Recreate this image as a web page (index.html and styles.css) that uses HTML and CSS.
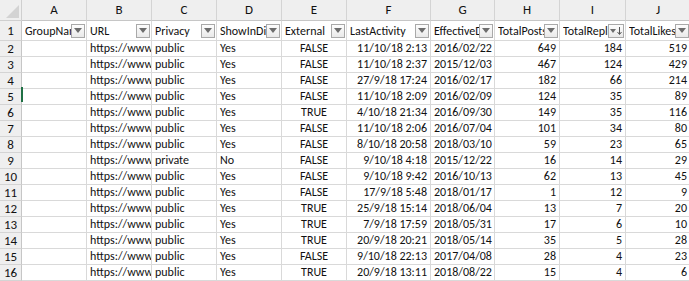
FILE: index.html
```html
<!DOCTYPE html>
<html>
<head>
<meta charset="utf-8">
<link rel="stylesheet" href="styles.css">
</head>
<body>
<div class="sheet">
  <div class="corner"><svg width="22" height="21" viewBox="0 0 22 21"><polygon points="6,18 19,18 19,5" fill="#d3d3d3"/></svg></div>
  <div class="colh">A</div><div class="colh">B</div><div class="colh">C</div><div class="colh">D</div><div class="colh">E</div><div class="colh">F</div><div class="colh">G</div><div class="colh">H</div><div class="colh">I</div><div class="colh">J</div>

  <div class="rowh first">1</div>
  <div class="hd"><span class="ht">GroupName</span><span class="flt"><i class="tri"></i></span></div>
  <div class="hd"><span class="ht">URL</span><span class="flt"><i class="tri"></i></span></div>
  <div class="hd"><span class="ht">Privacy</span><span class="flt"><i class="tri"></i></span></div>
  <div class="hd"><span class="ht">ShowInDirectory</span><span class="flt"><i class="tri"></i></span></div>
  <div class="hd"><span class="ht">External</span><span class="flt"><i class="tri"></i></span></div>
  <div class="hd"><span class="ht">LastActivity</span><span class="flt"><i class="tri"></i></span></div>
  <div class="hd"><span class="ht">EffectiveDate</span><span class="flt"><i class="tri"></i></span></div>
  <div class="hd"><span class="ht">TotalPosts</span><span class="flt"><i class="tri"></i></span></div>
  <div class="hd"><span class="ht">TotalReplies</span><span class="flt sort"><i class="tri small"></i><svg class="arr" width="5" height="8" viewBox="0 0 5 8"><path d="M2.5 0V7M0.5 5L2.5 7.5L4.5 5" stroke="#555" fill="none" stroke-width="1"/></svg></span></div>
  <div class="hd"><span class="ht">TotalLikes</span><span class="flt"><i class="tri"></i></span></div>

  <div class="rowh">2</div><div class="c"></div><div class="c">https://www.yammer.com</div><div class="c">public</div><div class="c">Yes</div><div class="c m">FALSE</div><div class="c r">11/10/18 2:13</div><div class="c">2016/02/22 1</div><div class="c r">649</div><div class="c r">184</div><div class="c r">519</div>
  <div class="rowh">3</div><div class="c"></div><div class="c">https://www.yammer.com</div><div class="c">public</div><div class="c">Yes</div><div class="c m">FALSE</div><div class="c r">11/10/18 2:37</div><div class="c">2015/12/03 1</div><div class="c r">467</div><div class="c r">124</div><div class="c r">429</div>
  <div class="rowh">4</div><div class="c"></div><div class="c">https://www.yammer.com</div><div class="c">public</div><div class="c">Yes</div><div class="c m">FALSE</div><div class="c r">27/9/18 17:24</div><div class="c">2016/02/17 1</div><div class="c r">182</div><div class="c r">66</div><div class="c r">214</div>
  <div class="rowh">5</div><div class="c sel"></div><div class="c">https://www.yammer.com</div><div class="c">public</div><div class="c">Yes</div><div class="c m">FALSE</div><div class="c r">11/10/18 2:09</div><div class="c">2016/02/09 1</div><div class="c r">124</div><div class="c r">35</div><div class="c r">89</div>
  <div class="rowh">6</div><div class="c"></div><div class="c">https://www.yammer.com</div><div class="c">public</div><div class="c">Yes</div><div class="c m">TRUE</div><div class="c r">4/10/18 21:34</div><div class="c">2016/09/30 1</div><div class="c r">149</div><div class="c r">35</div><div class="c r">116</div>
  <div class="rowh">7</div><div class="c"></div><div class="c">https://www.yammer.com</div><div class="c">public</div><div class="c">Yes</div><div class="c m">FALSE</div><div class="c r">11/10/18 2:06</div><div class="c">2016/07/04 1</div><div class="c r">101</div><div class="c r">34</div><div class="c r">80</div>
  <div class="rowh">8</div><div class="c"></div><div class="c">https://www.yammer.com</div><div class="c">public</div><div class="c">Yes</div><div class="c m">FALSE</div><div class="c r">8/10/18 20:58</div><div class="c">2018/03/10 1</div><div class="c r">59</div><div class="c r">23</div><div class="c r">65</div>
  <div class="rowh">9</div><div class="c"></div><div class="c">https://www.yammer.com</div><div class="c">private</div><div class="c">No</div><div class="c m">FALSE</div><div class="c r">9/10/18 4:18</div><div class="c">2015/12/22 1</div><div class="c r">16</div><div class="c r">14</div><div class="c r">29</div>
  <div class="rowh">10</div><div class="c"></div><div class="c">https://www.yammer.com</div><div class="c">public</div><div class="c">Yes</div><div class="c m">FALSE</div><div class="c r">9/10/18 9:42</div><div class="c">2016/10/13 1</div><div class="c r">62</div><div class="c r">13</div><div class="c r">45</div>
  <div class="rowh">11</div><div class="c"></div><div class="c">https://www.yammer.com</div><div class="c">public</div><div class="c">Yes</div><div class="c m">FALSE</div><div class="c r">17/9/18 5:48</div><div class="c">2018/01/17 1</div><div class="c r">1</div><div class="c r">12</div><div class="c r">9</div>
  <div class="rowh">12</div><div class="c"></div><div class="c">https://www.yammer.com</div><div class="c">public</div><div class="c">Yes</div><div class="c m">TRUE</div><div class="c r">25/9/18 15:14</div><div class="c">2018/06/04 1</div><div class="c r">13</div><div class="c r">7</div><div class="c r">20</div>
  <div class="rowh">13</div><div class="c"></div><div class="c">https://www.yammer.com</div><div class="c">public</div><div class="c">Yes</div><div class="c m">TRUE</div><div class="c r">7/9/18 17:59</div><div class="c">2018/05/31 1</div><div class="c r">17</div><div class="c r">6</div><div class="c r">10</div>
  <div class="rowh">14</div><div class="c"></div><div class="c">https://www.yammer.com</div><div class="c">public</div><div class="c">Yes</div><div class="c m">TRUE</div><div class="c r">20/9/18 20:21</div><div class="c">2018/05/14 1</div><div class="c r">35</div><div class="c r">5</div><div class="c r">28</div>
  <div class="rowh">15</div><div class="c"></div><div class="c">https://www.yammer.com</div><div class="c">public</div><div class="c">Yes</div><div class="c m">FALSE</div><div class="c r">9/10/18 22:13</div><div class="c">2017/04/08 1</div><div class="c r">28</div><div class="c r">4</div><div class="c r">23</div>
  <div class="rowh">16</div><div class="c"></div><div class="c">https://www.yammer.com</div><div class="c">public</div><div class="c">Yes</div><div class="c m">TRUE</div><div class="c r">20/9/18 13:11</div><div class="c">2018/08/22 1</div><div class="c r">15</div><div class="c r">4</div><div class="c r">6</div>
</div>
</body>
</html>
```
FILE: styles.css
```css
html, body {
  margin: 0;
  padding: 0;
  overflow: hidden;
  background: #ffffff;
}
.sheet {
  display: grid;
  grid-template-columns: 22px 65px 65px 65px 65px 65px 84px 64px 65px 66px 65px;
  grid-template-rows: 21px 20px repeat(15, 16px);
  font-family: Carlito, Calibri, Lato, "Liberation Sans", sans-serif;
  font-size: 12px;
  color: #000;
  width: 711px;
}
.corner {
  background: #efefef;
  border-right: 1px solid #cfcfcf;
  border-bottom: 1px solid #cfcfcf;
  box-sizing: border-box;
  overflow: hidden;
}
.corner svg { display: block; }
.colh {
  background: #efefef;
  border-right: 1px solid #d4d4d4;
  border-bottom: 1px solid #c6c6c6;
  box-sizing: border-box;
  text-align: center;
  font-size: 13px;
  line-height: 20px;
  color: #111;
}
.rowh {
  background: #efefef;
  border-right: 1px solid #c6c6c6;
  border-bottom: 1px solid #d4d4d4;
  box-sizing: border-box;
  font-size: 13px;
  color: #111;
  display: flex;
  align-items: center;
  justify-content: center;
}
.hd {
  display: flex;
  align-items: center;
  border-right: 1px solid #d9d9d9;
  border-bottom: 1px solid #d9d9d9;
  box-sizing: border-box;
  padding-left: 3px;
  overflow: hidden;
}
.ht {
  flex: 1;
  min-width: 0;
  overflow: hidden;
  white-space: nowrap;
  font-size: 12px;
  color: #111;
}
.flt {
  flex: none;
  width: 14px;
  height: 14px;
  margin-right: 1px;
  border: 1px solid #a9a9a9;
  box-sizing: border-box;
  background: linear-gradient(#fdfdfd, #e9e9e9);
  display: flex;
  align-items: center;
  justify-content: center;
}
.flt.sort {
  width: 16px;
  gap: 1px;
}
.tri {
  display: block;
  width: 0;
  height: 0;
  border-left: 4px solid transparent;
  border-right: 4px solid transparent;
  border-top: 5px solid #6d6d6d;
}
.tri.small {
  border-left-width: 3px;
  border-right-width: 3px;
  border-top-width: 4px;
}
.arr { display: block; }
.c {
  border-right: 1px solid #d9d9d9;
  border-bottom: 1px solid #d9d9d9;
  box-sizing: border-box;
  padding: 0 3px 0 3px;
  overflow: hidden;
  white-space: nowrap;
  line-height: 15px;
  font-size: 12px;
  color: #111;
}
.c.r { text-align: right; }
.c.m { text-align: center; }
.c.sel { position: relative; overflow: visible; }
.c.sel::before {
  content: "";
  position: absolute;
  left: -1px;
  top: -2px;
  width: 2px;
  height: 15px;
  background: #1f7044;
}
```
